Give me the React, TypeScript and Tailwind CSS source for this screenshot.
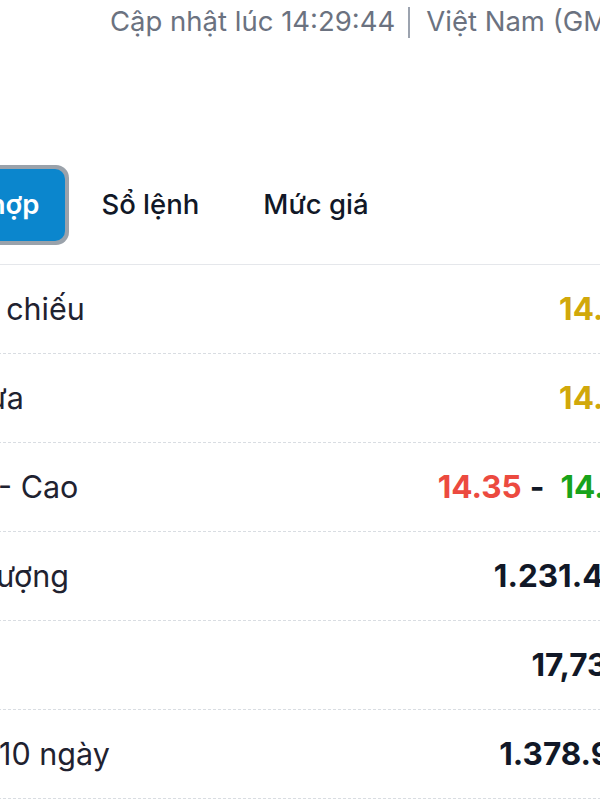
export default function App() {
  const rows: { label: string; value: React.ReactNode }[] = [
    { label: "Tham chiếu", value: <span className="text-[#d1a80a]">14.40</span> },
    { label: "Mở cửa", value: <span className="text-[#d1a80a]">14.40</span> },
    {
      label: "Thấp - Cao",
      value: (
        <span className="flex items-center">
          <span className="text-[#ec4a3f]">14.35</span>
          <span className="text-[#111827] ml-[8px] mr-[16px]">-</span>
          <span className="text-[#18a31b]">14.50</span>
        </span>
      ),
    },
    { label: "Khối lượng", value: <span className="text-[#111827]">1.231.400</span> },
    { label: "Giá trị", value: <span className="text-[#111827]">17,73 tỷ</span> },
    { label: "KLTB 10 ngày", value: <span className="text-[#111827]">1.378.910</span> },
  ];

  return (
    <div className="w-[600px] h-[800px] overflow-hidden bg-white font-['Inter',sans-serif]">
      <div className="ml-[-112px] w-[758px]">
        <div className="h-[163px] pt-[5px] pl-[222px] text-[27.5px] leading-[32px] text-[#6b7280] whitespace-nowrap flex items-start">
          <span>Cập nhật lúc 14:29:44</span>
          <span className="inline-block w-[2px] h-[31px] bg-[#9ca3af] ml-[13px] mr-[16px] mt-[2px] shrink-0" />
          <span>Việt Nam (GMT+7)</span>
        </div>
        <div className="h-[102px] border-b border-[#e5e7eb] flex items-start pt-[2px]">
          <div className="ml-[-3px] rounded-[13px] bg-[#9aa2ab] p-[4px] shrink-0">
            <div className="h-[72px] px-[26px] rounded-[10px] bg-[#0b86cd] text-white text-[27.5px] font-semibold flex items-center whitespace-nowrap">
              Tổng hợp
            </div>
          </div>
          <div className="h-[80px] flex items-center px-[32px] text-[27.5px] font-medium text-[#111827] whitespace-nowrap">
            Sổ lệnh
          </div>
          <div className="h-[80px] flex items-center px-[32px] text-[27.5px] font-medium text-[#111827] whitespace-nowrap">
            Mức giá
          </div>
        </div>
        <div className="pl-[30px]">
          {rows.map((r) => (
            <div
              key={r.label}
              className="h-[89px] border-b border-dashed border-[#d9dde2] flex items-center justify-between whitespace-nowrap"
            >
              <span className="text-[30.5px] text-[#1f2230] -ml-[2px]">{r.label}</span>
              <span className="text-[31.5px] font-bold">{r.value}</span>
            </div>
          ))}
        </div>
      </div>
    </div>
  );
}
